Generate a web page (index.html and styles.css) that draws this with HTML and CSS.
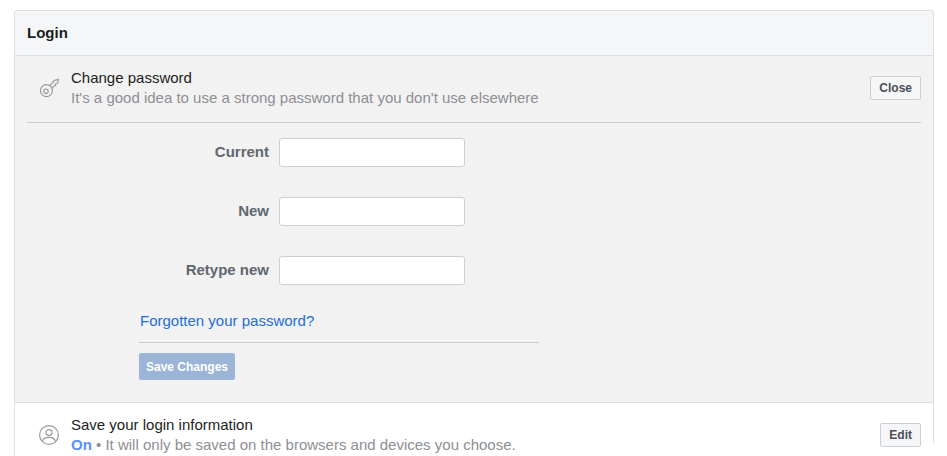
FILE: index.html
```html
<!DOCTYPE html>
<html lang="en">
<head>
    <meta charset="UTF-8">
    <title>Login</title>
    <link rel="stylesheet" href="styles.css">
</head>
<body>

<div class="panel">
    <div class="panel-title">Login</div>

    <div class="section open">
        <div class="row">
            <svg class="row-icon" width="20" height="20" viewBox="0 0 20 20" fill="none" stroke="#9a9ca1" stroke-width="1.2">
                <circle cx="7.4" cy="12.6" r="6"/>
                <circle cx="7" cy="13.2" r="2.2"/>
                <path d="M10.6 7.8 L15.6 2.4 L19.2 1.4 L18.8 5 L16.8 5.6 L16.4 7.6 L14.4 8.2 L13 10.4"/>
            </svg>
            <div class="row-text">
                <div class="row-title">Change password</div>
                <div class="row-sub">It's a good idea to use a strong password that you don't use elsewhere</div>
            </div>
            <button class="btn" type="button">Close</button>
        </div>

        <form class="pw-form">
            <div class="field">
                <label for="current">Current</label>
                <input type="password" id="current">
            </div>
            <div class="field">
                <label for="new">New</label>
                <input type="password" id="new">
            </div>
            <div class="field">
                <label for="retype">Retype new</label>
                <input type="password" id="retype">
            </div>
            <div class="form-foot">
                <a class="forgot" href="#">Forgotten your password?</a>
                <button class="save" type="button">Save Changes</button>
            </div>
        </form>
    </div>

    <div class="section">
        <div class="row">
            <svg class="row-icon" width="20" height="20" viewBox="0 0 20 20" fill="none" stroke="#9a9ca1" stroke-width="1.2">
                <circle cx="10" cy="10" r="9.4"/>
                <circle cx="10" cy="7.6" r="3"/>
                <path d="M3.6 16.4 C4.2 13.6 6.6 12.4 10 12.4 C13.4 12.4 15.8 13.6 16.4 16.4"/>
            </svg>
            <div class="row-text">
                <div class="row-title">Save your login information</div>
                <div class="row-sub"><b class="on">On</b> <span class="dot">•</span> It will only be saved on the browsers and devices you choose.</div>
            </div>
            <button class="btn" type="button">Edit</button>
        </div>
    </div>
</div>

<div class="corner"></div>

</body>
</html>
```

FILE: styles.css
```css
body {
    margin: 0;
    height: 456px;
    overflow: hidden;
    background-color: white;
    font-family: "Liberation Sans", Arial, sans-serif;
    color: #1c1e21;
}

.panel {
    box-sizing: border-box;
    width: 920px;
    height: 446px;
    margin: 10px 0 0 14px;
    border: 1px solid #dddfe2;
    border-bottom: none;
    border-radius: 3px 3px 0 0;
    overflow: hidden;
}

.panel-title {
    height: 44px;
    line-height: 44px;
    padding-left: 12px;
    font-size: 15px;
    font-weight: bold;
    background-color: #f5f6f7;
    border-bottom: 1px solid #dddfe2;
}

.section {
    padding: 0 12px;
    background-color: white;
}

.section.open {
    background-color: #f2f2f2;
    border-bottom: 1px solid #dddfe2;
    height: 346px;
}

.row {
    display: flex;
    align-items: center;
    height: 64px;
    padding-bottom: 2px;
}

.section.open .row {
    border-bottom: 1px solid #ccc;
}

.row-icon {
    flex: none;
    margin-left: 12px;
    margin-right: 12px;
}

.row-text {
    flex: 1;
    font-size: 15px;
    line-height: 20px;
}

.row-sub {
    color: #8d8f94;
}

.on {
    color: #5890ff;
}

.dot {
    color: #8d8f94;
}

.btn {
    height: 24px;
    padding: 0 8px;
    font-family: inherit;
    font-size: 12px;
    font-weight: bold;
    color: #4b4f56;
    background-color: #f5f6f7;
    border: 1px solid #ccd0d5;
    border-radius: 2px;
}

.pw-form {
    padding-top: 15px;
}

.field {
    display: flex;
    align-items: center;
    height: 29px;
    margin-bottom: 30px;
}

.field label {
    width: 242px;
    margin-right: 10px;
    padding-bottom: 2px;
    text-align: right;
    font-size: 15px;
    font-weight: bold;
    color: #606770;
}

.field input {
    box-sizing: border-box;
    width: 186px;
    height: 29px;
    background-color: white;
    border: 1px solid #ccd0d5;
    border-radius: 3px;
}

.form-foot {
    width: 400px;
    margin-left: 112px;
    margin-top: -3px;
}

.forgot {
    display: block;
    box-sizing: border-box;
    height: 31px;
    padding-left: 1px;
    font-size: 15px;
    line-height: 17px;
    color: #216fdb;
    text-decoration: none;
    border-bottom: 1px solid #ccc;
}

.save {
    display: block;
    width: 96px;
    height: 27px;
    margin-top: 10px;
    padding: 0;
    font-family: inherit;
    font-size: 12px;
    font-weight: bold;
    color: white;
    background-color: #9cb4d8;
    border: none;
    border-radius: 2px;
}

/* chat bubble cut off in the corner of the window */
.corner {
    position: absolute;
    left: 915px;
    top: 442px;
    width: 32px;
    height: 14px;
    border-radius: 30px 0 0 0 / 14px 0 0 0;
    background-color: white;
}
```
